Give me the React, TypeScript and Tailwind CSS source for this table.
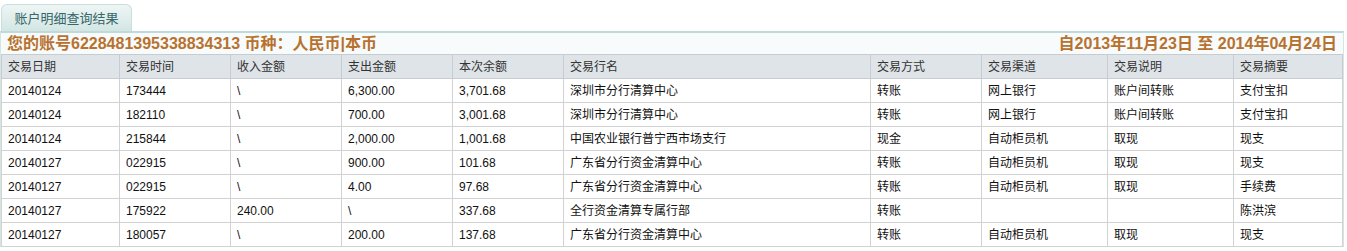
const cols = [
  { label: "交易日期", w: "w-[118px]" },
  { label: "交易时间", w: "w-[111px]" },
  { label: "收入金额", w: "w-[111px]" },
  { label: "支出金额", w: "w-[111px]" },
  { label: "本次余额", w: "w-[111px]" },
  { label: "交易行名", w: "w-[307px]" },
  { label: "交易方式", w: "w-[111px]" },
  { label: "交易渠道", w: "w-[126px]" },
  { label: "交易说明", w: "w-[126px]" },
  { label: "交易摘要", w: "" },
];

const rows = [
  ["20140124", "173444", "\\", "6,300.00", "3,701.68", "深圳市分行清算中心", "转账", "网上银行", "账户间转账", "支付宝扣"],
  ["20140124", "182110", "\\", "700.00", "3,001.68", "深圳市分行清算中心", "转账", "网上银行", "账户间转账", "支付宝扣"],
  ["20140124", "215844", "\\", "2,000.00", "1,001.68", "中国农业银行普宁西市场支行", "现金", "自动柜员机", "取现", "现支"],
  ["20140127", "022915", "\\", "900.00", "101.68", "广东省分行资金清算中心", "转账", "自动柜员机", "取现", "现支"],
  ["20140127", "022915", "\\", "4.00", "97.68", "广东省分行资金清算中心", "转账", "自动柜员机", "取现", "手续费"],
  ["20140127", "175922", "240.00", "\\", "337.68", "全行资金清算专属行部", "转账", "", "", "陈洪滨"],
  ["20140127", "180057", "\\", "200.00", "137.68", "广东省分行资金清算中心", "转账", "自动柜员机", "取现", "现支"],
];

export default function App() {
  return (
    <div className="w-[1347px] h-[251px] bg-white pt-[4px] font-['Liberation_Sans','Noto_Sans_CJK_SC',sans-serif] text-[12px]">
      <div className="flex">
        <div className="ml-[1px] w-[131px] h-[27px] rounded-t-[6px] border border-b-0 border-[#c9dedd] bg-gradient-to-b from-[#eef6f5] to-[#d3e6e3] text-[#36676a] text-[13px] flex items-center justify-center pt-[2px]">
          账户明细查询结果
        </div>
      </div>
      <div className="w-[1344px] border-t-2 border-[#bfdad8] border-x border-x-[#d6e4e4]">
        <div className="h-[21px] bg-[#f7fbfb] flex items-center justify-between px-[6px] text-[#b8722f] text-[16px] font-bold leading-none">
          <span>您的账号6228481395338834313 币种：人民币|本币</span>
          <span>自2013年11月23日 至 2014年04月24日</span>
        </div>
        <table className="w-full border-collapse table-fixed">
          <thead>
            <tr className="bg-[#dfe4e8] h-[24px]">
              {cols.map((c) => (
                <th key={c.label} className={`${c.w} text-left font-normal text-[#333] px-[6px] border border-[#c8ccd0]`}>
                  {c.label}
                </th>
              ))}
            </tr>
          </thead>
          <tbody>
            {rows.map((r, i) => (
              <tr key={i} className="h-[24px]">
                {r.map((cell, j) => (
                  <td key={j} className="px-[6px] text-[#111] border border-[#d2d2d2] whitespace-nowrap">
                    {cell}
                  </td>
                ))}
              </tr>
            ))}
          </tbody>
        </table>
      </div>
    </div>
  );
}
